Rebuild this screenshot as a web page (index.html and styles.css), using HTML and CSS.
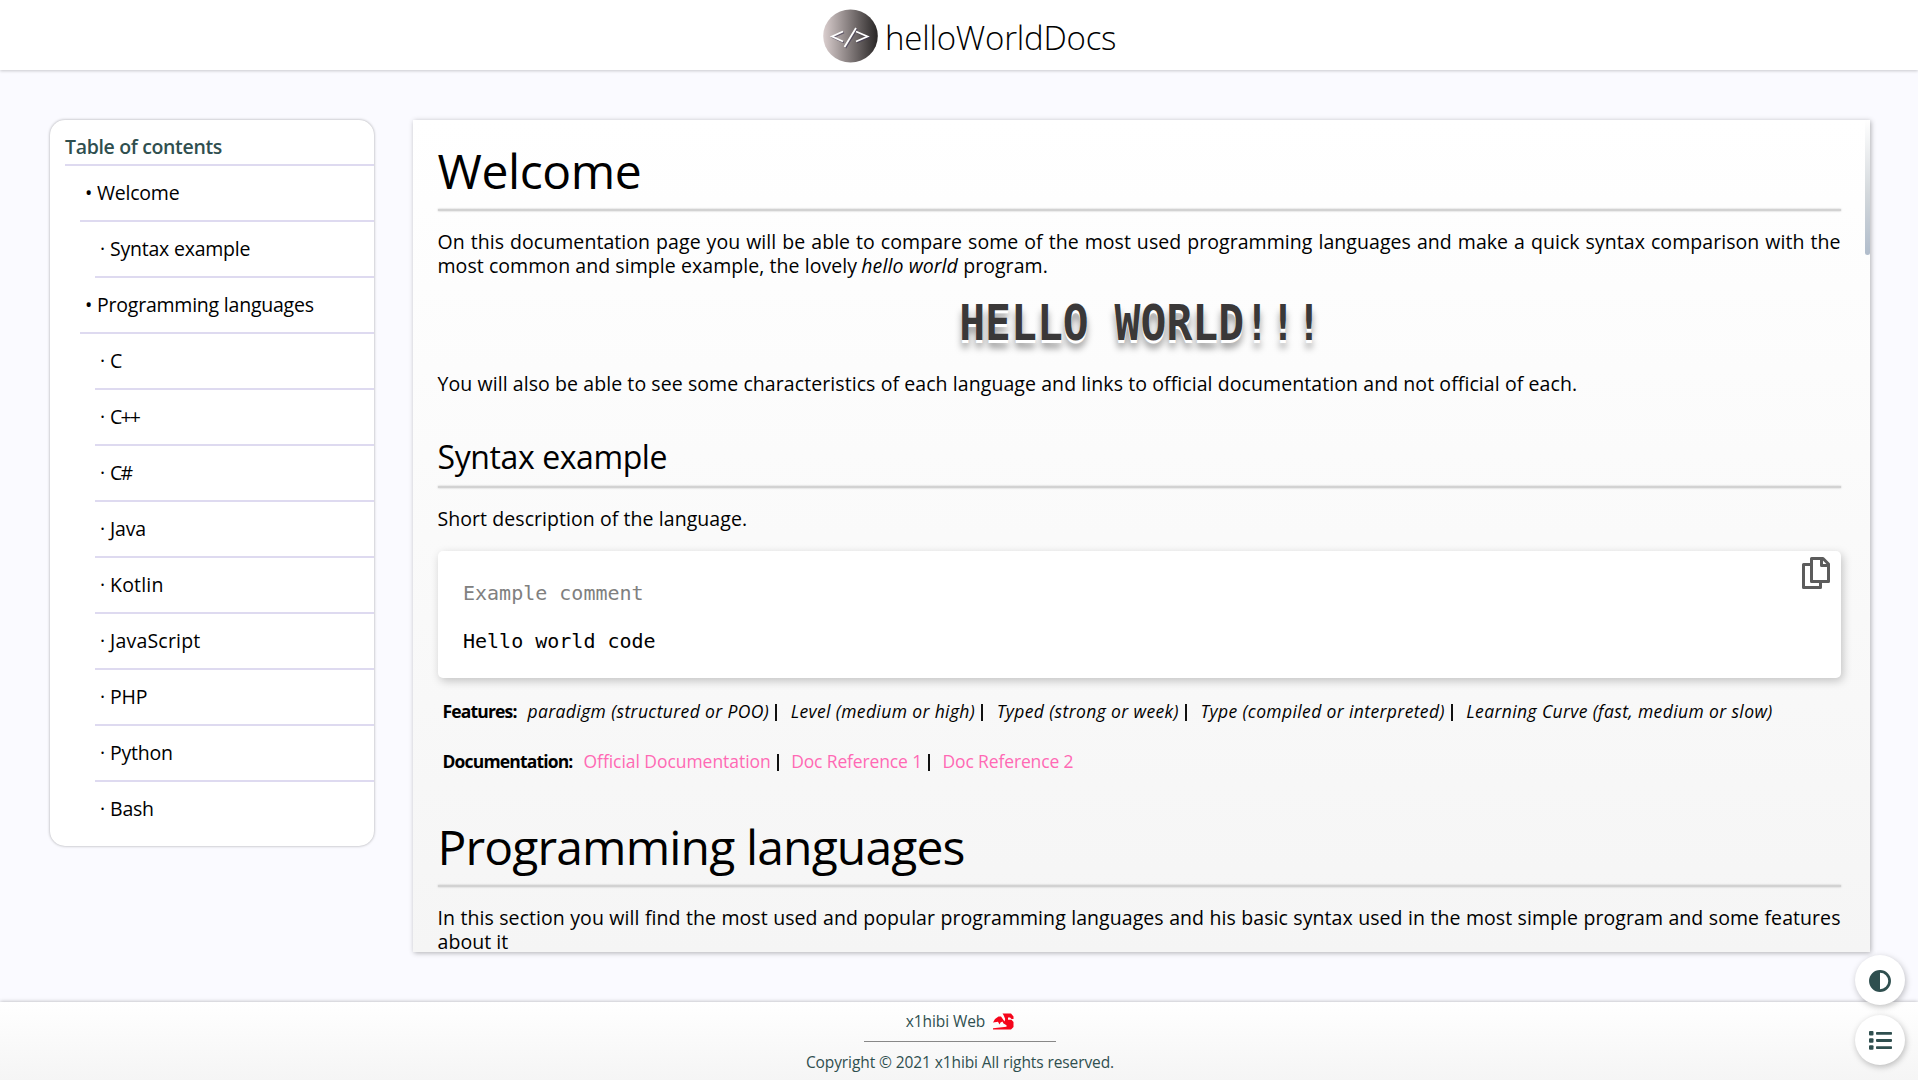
FILE: index.html
```html
<!DOCTYPE html>
<html lang="en">
<head>
<meta charset="utf-8">
<title>helloWorldDocs</title>
<link rel="stylesheet" href="styles.css">
</head>
<body>
<header class="header">
  <svg class="logo" width="55" height="54" viewBox="0 0 55 54">
    <defs><linearGradient id="lg"><stop offset="0" stop-color="#dacece"/><stop offset="1" stop-color="#282525"/></linearGradient></defs>
    <ellipse cx="27.500" cy="27" rx="27.300" ry="26.600" fill="url(#lg)"/>
    <g fill="none" stroke-width="1.800">
      <path d="M21 23.500 10 28.500 21 33.500M34 20 22.500 39M34 23.500 45.500 28.500 34 33.500" stroke="#3d3550" opacity=".6"/>
      <path d="M20 22.500 9 27.500 20 32.500M33 19 21.500 38M33 22.500 44.500 27.500 33 32.500" stroke="#fff"/>
    </g>
  </svg>
  <span class="brand">helloWorldDocs</span>
</header>
<div class="layout">
  <nav class="toc">
    <h3 class="toc-title">Table of contents</h3>
    <a class="row one"><i>•</i><span>Welcome</span></a>
    <a class="row two"><i>·</i><span>Syntax example</span></a>
    <a class="row one"><i>•</i><span>Programming languages</span></a>
    <a class="row two"><i>·</i><span>C</span></a>
    <a class="row two"><i>·</i><span class="tight">C++</span></a>
    <a class="row two"><i>·</i><span class="tight">C#</span></a>
    <a class="row two"><i>·</i><span>Java</span></a>
    <a class="row two"><i>·</i><span class="loose">Kotlin</span></a>
    <a class="row two"><i>·</i><span class="loose">JavaScript</span></a>
    <a class="row two"><i>·</i><span>PHP</span></a>
    <a class="row two"><i>·</i><span>Python</span></a>
    <a class="row two"><i>·</i><span>Bash</span></a>
  </nav>
  <main class="doc">
    <h1 class="h1">Welcome</h1>
    <div class="rule"></div>
    <p class="text">On this documentation page you will be able to compare some of the most used programming languages and make a quick syntax comparison with the most common and simple example, the lovely <em>hello world</em> program.</p>
    <div class="hello"><span>HELLO WORLD!!!</span></div>
    <p class="text flush">You will also be able to see some characteristics of each language and links to official documentation and not official of each.</p>
    <h2 class="h2">Syntax example</h2>
    <div class="rule"></div>
    <p class="text">Short description of the language.</p>
    <div class="code">
      <pre><span class="comment">Example comment</span>

Hello world code</pre>
      <svg class="copy" width="28" height="32" viewBox="0 0 28 32" fill="none" stroke="#5c5c5c" stroke-width="3" stroke-linejoin="round">
        <path d="M8.500 7.500H1.500V30.500H18.500V25"/><path d="M9.500 1.500H21L26.500 7V24.500H9.500Z"/><path d="M19.500 1.500V8.500H26.500" />
      </svg>
    </div>
    <div class="meta features"><b>Features:</b><em>paradigm (structured or POO)</em><em>Level (medium or high)</em><em>Typed (strong or week)</em><em>Type (compiled or interpreted)</em><em>Learning Curve (fast, medium or slow)</em></div>
    <div class="meta links"><b>Documentation:</b><a>Official Documentation</a><a>Doc Reference 1</a><a>Doc Reference 2</a></div>
    <h1 class="h1 next">Programming languages</h1>
    <div class="rule"></div>
    <p class="text">In this section you will find the most used and popular programming languages and his basic syntax used in the most simple program and some features about it</p>
    <div class="thumb"></div>
  </main>
</div>
<footer class="footer">
  <div class="author"><span>x1hibi Web</span>
    <svg width="21" height="17" viewBox="0 0 21 17" fill="#f5051b"><path d="M9.500.5H18L20.500 3.500V6H18.500L17 4.500H15V6.800H18.500L20.500 9V14L18 16.500H0V15.200L13.500 13.800V12.300L10.500 10.500 9.500 8.500 7.500 9.500 6.500 11.500 5 8.800 0 9.500 2 6 5.500 3.500H8L11.500 8.500 12.200 6 10.500 2Z"/></svg>
  </div>
  <div class="line"></div>
  <div class="copyright">Copyright © 2021 x1hibi All rights reserved.</div>
</footer>
<div class="fabs">
  <div class="fab"><svg width="22" height="22" viewBox="0 0 22 22"><circle cx="11" cy="11" r="9.600" fill="none" stroke="#2f4f4f" stroke-width="2.700"/><path d="M11 1A10 10 0 0 0 11 21Z" fill="#2f4f4f"/></svg></div>
  <div class="fab"><svg width="23" height="19" viewBox="0 0 23 19" fill="#2f4f4f"><rect y="0" width="4.500" height="4.500" rx="1"/><rect y="7.200" width="4.500" height="4.500" rx="1"/><rect y="14.300" width="4.500" height="4.500" rx="1"/><rect x="7" y="1" width="16" height="2.800" rx=".8"/><rect x="7" y="8.100" width="16" height="2.800" rx=".8"/><rect x="7" y="15.200" width="16" height="2.800" rx=".8"/></svg></div>
</div>
</body>
</html>
```
FILE: styles.css
```css
* { box-sizing: border-box; margin: 0; padding: 0; }
body { width: 1918px; height: 1080px; overflow: hidden; display: flex; flex-direction: column; background: #fafaff; color: #000; font: 19.5px/24px "Open Sans", "Noto Sans", sans-serif; }
.header { height: 70px; flex: none; display: flex; padding: 8.500px 0 0 823px; background: #fff; box-shadow: 0 1px 3px rgba(0,0,0,.2); }
.brand { margin-left: 7px; font-size: 33px; font-weight: 300; line-height: 57px; letter-spacing: -.22px; }
.layout { flex: 1; display: flex; align-items: flex-start; padding: 50px 0 0 50px; }
.toc { width: 324px; height: 726px; margin-right: 39px; padding: 15px 0 0 15px; background: #fff; border-radius: 15px; box-shadow: 0 0 3px rgba(0,0,0,.35); }
.toc-title { height: 31px; font-size: 19.5px; font-weight: 600; letter-spacing: -.34px; color: #2f4f4f; border-bottom: 2px solid #dedaf0; line-height: 24px; }
.row { display: flex; height: 56px; line-height: 54px; border-bottom: 2px solid #dedaf0; letter-spacing: -.22px; }
.row:last-child { border: 0; }
.row i { font-style: normal; }
.one { margin-left: 15px; padding-left: 5px; }
.one i { width: 12px; font-size: 19.5px; }
.two { margin-left: 30px; padding-left: 5px; }
.two i { width: 10px; }
.tight { letter-spacing: -1.9px; }
.loose { letter-spacing: .2px; }
.doc { position: relative; width: 1457px; height: 832px; padding: 20px 29.500px 0 24.500px; overflow: hidden; background: linear-gradient(#fff, #f5f5f5); box-shadow: 1px 1px 5px rgba(0,0,0,.3); }
.h1 { height: 69px; padding-top: 1px; font-size: 48px; font-weight: 400; line-height: 60px; letter-spacing: -.85px; }
.h1:first-child { letter-spacing: -.4px; }
.next { margin-top: 40px; }
.h2 { height: 53px; margin-top: 37px; font-size: 32px; font-weight: 400; line-height: 48px; letter-spacing: -.4px; }
.rule { height: 2px; background: #d2d2d2; box-shadow: 0 0 2px #bbb; }
.text { margin-top: 19px; text-align: justify; letter-spacing: .065px; }
.text em { margin-left: -1px; letter-spacing: .1px; }
.flush { margin-top: 0; letter-spacing: .08px; }
.hello { height: 94px; padding-left: 3px; text-align: center; font: bold 49px/92px "DejaVu Sans Mono", monospace; color: #3a3838; text-shadow: 0 3px 0 #fff, 0 8px 8px rgba(0,0,0,.4); }
.hello span { display: inline-block; transform: scaleX(.878); }
.code { position: relative; height: 127px; margin-top: 20px; padding: 30px 25.500px; background: #fff; border-radius: 5px; box-shadow: 2px 3px 10px rgba(0,0,0,.22); }
.code pre { font: 20px/24px "DejaVu Sans Mono", monospace; }
.comment { color: #808080; }
.copy { position: absolute; right: 11px; top: 6px; }
.meta { display: flex; height: 30px; margin-top: 18px; padding-left: 5px; font-size: 17.5px; line-height: 30px; white-space: nowrap; }
.meta b { margin-right: 11px; letter-spacing: -.84px; }
.meta a { letter-spacing: -.05px; }
.meta em { letter-spacing: .38px; }
.meta em:not(:last-child)::after, .meta a:not(:last-child)::after { content: ""; display: inline-block; width: 2px; height: 17px; margin: 0 13.500px 0 6px; background: #111; vertical-align: -3px; }
.links { margin-top: 20px; }
.links a + a { letter-spacing: -.14px; }
.links a:not(:last-child)::after { margin: 0 12.500px 0 6px; }
.meta a { color: #ff69b4; }
.thumb { position: absolute; right: 0; top: 0; width: 5px; height: 135px; border-radius: 0 0 3px 3px; background: linear-gradient(#fff, #d3d8dc 55%, #b0bccb); }
.footer { height: 78px; flex: none; display: flex; flex-direction: column; align-items: center; padding: 9px 0 0 2px; background: linear-gradient(#fff, #f5f5f5); box-shadow: 0 0 4px rgba(0,0,0,.3); color: #2f4f4f; font-size: 15.5px; line-height: 20px; letter-spacing: -.1px; }
.author { display: flex; gap: 8px; align-items: center; }
.line { width: 192px; height: 1px; margin: 10px 0 10px; background: #888; }
.fabs { position: absolute; left: 1855px; top: 955px; display: grid; gap: 10px; }
.fab { width: 50px; height: 50px; padding-top: 1px; display: flex; align-items: center; justify-content: center; border-radius: 50%; background: #fff; box-shadow: 1px 2px 6px rgba(0,0,0,.25); }
```
